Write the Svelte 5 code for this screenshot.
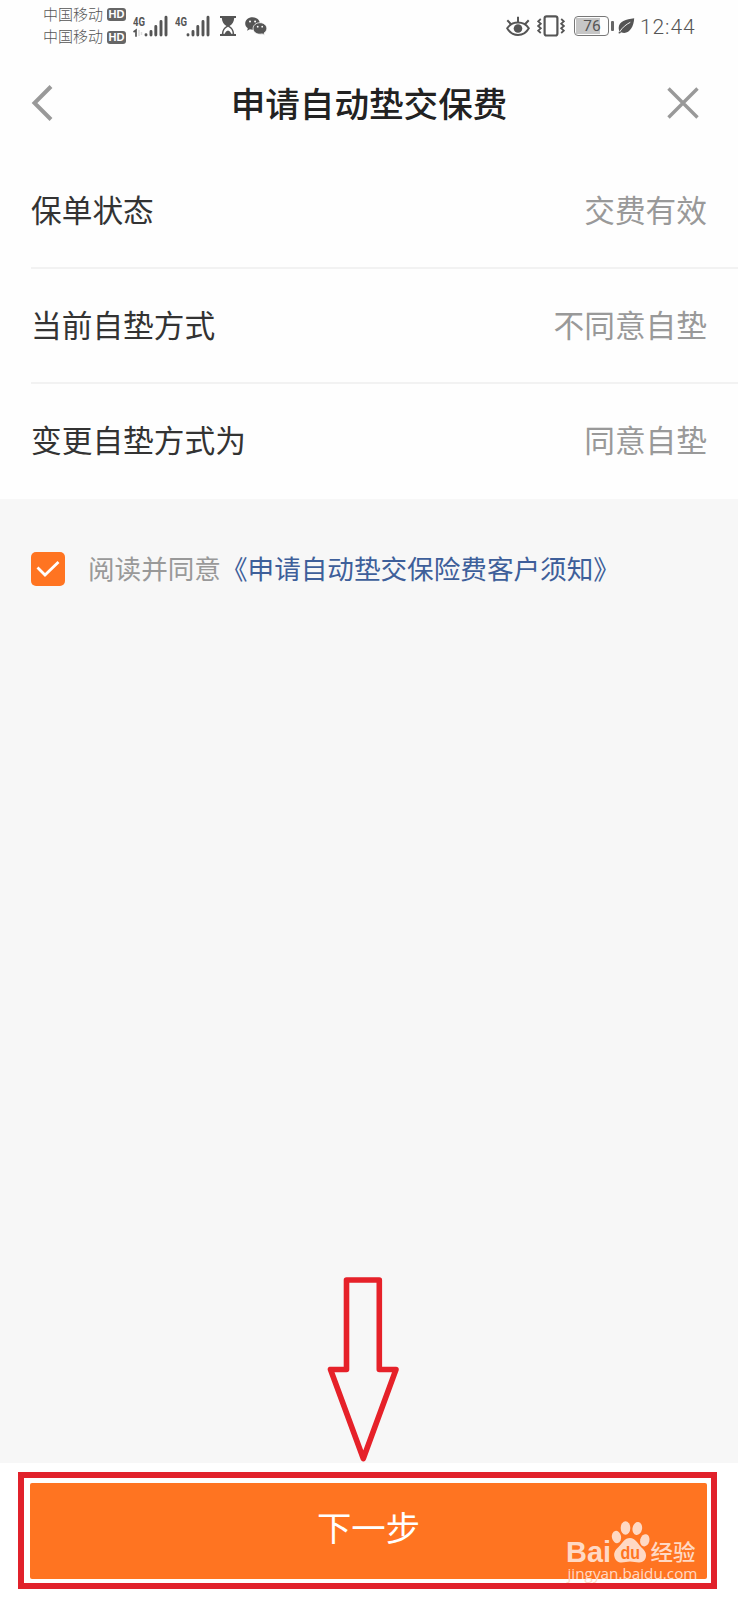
<script>
  const carriers = ["中国移动", "中国移动"];

  const rows = [
    { label: "保单状态", value: "交费有效" },
    { label: "当前自垫方式", value: "不同意自垫" },
    { label: "变更自垫方式为", value: "同意自垫" },
  ];

  let agreed = $state(true);
</script>

<div class="screen">
  <div class="status">
    <div class="carriers">
      {#each carriers as name}
        <div class="carrier"><span>{name}</span><b class="hd">HD</b></div>
      {/each}
    </div>

    <svg class="signal" width="36" height="24" viewBox="0 0 36 24">
      <text x="0" y="11.5" class="net" textLength="12" lengthAdjust="spacingAndGlyphs">4G</text>
      <path d="M0.5 18 L3 16.2 V22.8" fill="none" stroke="#555" stroke-width="1.7" />
      <path d="M6 16 V22 M8.5 18 V21" stroke="#ddd" stroke-width="1.5" />
      <path d="M13 20.8V21M18 17.5V21M22.8 12.5V21M28 7.5V21M33 3.3V21" class="bars" />
    </svg>
    <svg class="signal second" width="36" height="24" viewBox="0 0 36 24">
      <text x="0" y="11.5" class="net" textLength="12" lengthAdjust="spacingAndGlyphs">4G</text>
      <path d="M13 20.8V21M18 17.5V21M22.8 12.5V21M28 7.5V21M33 3.3V21" class="bars" />
    </svg>

    <svg class="hourglass" width="16" height="20" viewBox="0 0 16 20">
      <path d="M0 0H16V2H14.2C14 6 12 8.4 9.5 10C12 11.6 14 14 14.2 18H16V20H0V18H1.8C2 14 4 11.6 6.5 10C4 8.4 2 6 1.8 2H0Z" fill="#555" />
      <path d="M8 10.8C5 12.2 3.5 14.5 3.3 17.8H4.8C5.5 15.5 6.5 14.8 8 14.4C9.5 14.8 10.5 15.5 11.2 17.8H12.7C12.5 14.5 11 12.2 8 10.8Z" fill="#fff" />
    </svg>

    <svg class="wechat" width="22" height="19" viewBox="0 0 22 19">
      <path d="M7.5 0.3C3.4 0.3 0.2 3 0.2 6.5C0.2 8.5 1.2 10.2 2.8 11.3L2.1 13.7L4.9 12.3C5.8 12.6 6.6 12.7 7.5 12.7C11.7 12.7 14.9 10 14.9 6.5S11.7 0.3 7.5 0.3Z" fill="#555" />
      <path d="M15 5.7C11.1 5.7 8.1 8.2 8.1 11.5S11.1 17.2 15 17.2C15.8 17.2 16.5 17.1 17.2 16.9L19.6 18.3L19 16.1C20.8 15 21.8 13.4 21.8 11.5C21.8 8.2 18.8 5.7 15 5.7Z" fill="#555" stroke="#fff" stroke-width="0.8" />
      <circle cx="5" cy="4.6" r="1" fill="#fff" />
      <circle cx="10.1" cy="4.6" r="1" fill="#fff" />
      <circle cx="12.7" cy="9.7" r="0.9" fill="#fff" />
      <circle cx="17.2" cy="9.7" r="0.9" fill="#fff" />
    </svg>

    <div class="gap"></div>

    <svg class="eye" width="24" height="21" viewBox="0 0 24 21" fill="none" stroke="#555" stroke-width="2">
      <path d="M1.2 12.3C6.2 4.7 17.8 4.7 22.8 12.3C17.8 21.3 6.2 21.3 1.2 12.3Z" />
      <path d="M12 6V0.8M5 8.2L1.3 4.2M19 8.2L22.7 4.2" />
      <circle cx="12" cy="12.5" r="4.3" fill="#555" stroke="none" />
    </svg>

    <svg class="vibrate" width="28" height="22" viewBox="0 0 28 22" fill="none" stroke="#555">
      <rect x="7.6" y="1.3" width="12.8" height="19.2" rx="2" stroke-width="2.2" />
      <path d="M3.8 4L1.2 6.3L3.8 8.7L1.2 11L3.8 13.3L1.2 15.7L3.8 18M24.2 4L26.8 6.3L24.2 8.7L26.8 11L24.2 13.3L26.8 15.7L24.2 18" stroke-width="1.8" />
    </svg>

    <div class="battery"><span>76</span></div>
    <i class="cap"></i>

    <svg class="leaf" width="17" height="17" viewBox="0 0 17 17">
      <path d="M16.2 0.3C8 1.2 0.5 3.5 0.7 10.2C0.7 11 0.9 11.8 1.2 12.5L0.5 15.2L2 15.5L3 14.2C10.5 17.2 15.7 9.8 16.2 0.3Z" fill="#555" />
      <path d="M1.5 14C4.5 9.3 8 6.5 12.3 4.3" fill="none" stroke="#fff" stroke-width="0.9" />
    </svg>
    <span class="clock">12:44</span>
  </div>

  <header>
    <button class="nav" aria-label="返回">
      <svg width="22" height="38" viewBox="0 0 22 38" fill="none" stroke="#999" stroke-width="4">
        <path d="M20 2.5L3.5 19L20 35.5" />
      </svg>
    </button>
    <h1>申请自动垫交保费</h1>
    <button class="nav" aria-label="关闭">
      <svg width="32" height="32" viewBox="0 0 32 32" fill="none" stroke="#999" stroke-width="3.4">
        <path d="M1.5 1.5L30.5 30.5M30.5 1.5L1.5 30.5" />
      </svg>
    </button>
  </header>

  <section class="rows">
    {#each rows as row}
      <div class="row">
        <span>{row.label}</span>
        <span class="value">{row.value}</span>
      </div>
    {/each}
  </section>

  <main>
    <div class="agreement">
      <button class="check" class:on={agreed} role="checkbox" aria-checked={agreed} aria-label="阅读并同意" onclick={() => (agreed = !agreed)}>
        {#if agreed}
          <svg width="24" height="18" viewBox="0 0 24 18" fill="none" stroke="#fff" stroke-width="2.8">
            <path d="M1.5 7.5L9 15L22.5 2" />
          </svg>
        {/if}
      </button>
      <span>阅读并同意</span><span class="link">《申请自动垫交保险费客户须知》</span>
    </div>
  </main>

  <footer>
    <button class="next">下一步</button>
  </footer>

  <!-- guide marks over the page -->
  <div class="frame"></div>
  <svg class="arrow" width="76" height="188" viewBox="0 0 76 188" fill="none" stroke="#e62129" stroke-width="5.6" stroke-linejoin="round">
    <path d="M21.5 5H54.3V94.5H71L38.3 183.5L5.5 94.5H21.5Z" />
  </svg>

  <svg class="watermark" width="140" height="64" viewBox="0 0 140 64" fill="#ffd9c4">
    <text x="0" y="41.5" class="brand" textLength="45" lengthAdjust="spacingAndGlyphs">Bai</text>
    <ellipse cx="50.5" cy="17" rx="4.6" ry="6.2" transform="rotate(-12 50.5 17)" />
    <ellipse cx="59.5" cy="8" rx="4.8" ry="6.7" />
    <ellipse cx="71.3" cy="8.5" rx="4.8" ry="6.5" transform="rotate(10 71.3 8.5)" />
    <ellipse cx="78.8" cy="20.3" rx="4.6" ry="6.2" transform="rotate(14 78.8 20.3)" />
    <path d="M64 18C58.5 18 56.5 23 52.5 27C48 31 47.8 34 48.5 37C49.3 40.5 52 42.5 55.5 42.5C59 42.5 61 41.5 64 41.5S70 42.5 73 42.5C77.5 42.5 80 39.5 80 35.5C80 31.5 77.5 29.5 75 27C71.5 23.5 69.5 18 64 18Z" />
    <text x="54.5" y="38.5" class="du" textLength="19.5" lengthAdjust="spacingAndGlyphs">du</text>
    <text x="84.5" y="39.5" class="cn" textLength="45" lengthAdjust="spacingAndGlyphs">经验</text>
    <text x="1.5" y="58.5" class="site" textLength="130" lengthAdjust="spacingAndGlyphs">jingyan.baidu.com</text>
  </svg>
</div>

<style>
  :global(body) { margin: 0; background: #fff; }
  .screen {
    position: relative;
    display: flex;
    flex-direction: column;
    width: 738px;
    height: 1600px;
    overflow: hidden;
    background: #fefefe;
    color: #333;
    font-family: "Noto Sans CJK SC", sans-serif;
  }
  button { border: none; padding: 0; background: none; font: inherit; cursor: pointer; }
  svg { display: block; flex-shrink: 0; }

  .status {
    display: flex;
    align-items: center;
    height: 52px;
    box-sizing: border-box;
    padding: 0 43px 0 43px;
    color: #555;
  }
  .carriers { width: 90px; }
  .carrier { display: flex; align-items: center; gap: 4px; height: 22.5px; font-size: 15px; font-weight: 300; line-height: 20px; }
  .carrier span { padding-bottom: 2px; }
  .hd {
    width: 19px;
    height: 13px;
    border-radius: 3px;
    background: #666;
    color: #fff;
    font: bold 11px/13px "Liberation Sans", sans-serif;
    text-align: center;
  }
  .net { font: bold 13px Roboto, sans-serif; fill: #555; }
  .bars { stroke: #555; stroke-width: 2.9; stroke-linecap: round; }
  .second { margin-left: 6px; }
  .hourglass { margin-left: 9px; }
  .wechat { margin-left: 9px; }
  .gap { flex: 1; }
  .vibrate { margin-left: 7px; margin-right: 9px; }
  .battery {
    width: 35px;
    height: 20px;
    box-sizing: border-box;
    padding: 1px;
    border: 1.5px solid #777;
    border-radius: 4px;
    font: 15.5px/16px Roboto, sans-serif;
    text-align: center;
  }
  .battery span { display: block; width: 24px; height: 16px; padding-left: 4px; background: linear-gradient(90deg, #c6c6c6 24px, transparent 24px); }
  .cap { width: 3px; height: 10px; margin-left: 2px; border-radius: 1px; background: #666; }
  .leaf { margin: 0 5px 0 4px; }
  .clock { width: 55px; padding-top: 2px; font: 300 21px/24px Roboto, sans-serif; letter-spacing: 0.9px; white-space: nowrap; }

  header {
    display: flex;
    align-items: center;
    justify-content: space-between;
    height: 102px;
    box-sizing: border-box;
    padding: 0 39px 0 31px;
  }
  .nav { width: 32px; display: flex; }
  h1 { margin: 0 0 3px 8px; color: #222; font-size: 34.6px; font-weight: 500; line-height: 50px; }

  .rows { padding-left: 31px; }
  .row {
    display: flex;
    justify-content: space-between;
    align-items: center;
    height: 115px;
    box-sizing: border-box;
    padding: 0 31px 5px 0;
    border-bottom: 2px solid #f2f2f2;
    font-size: 30.7px;
  }
  .row:last-child { border-bottom-color: transparent; }
  .value { color: #999; }

  main { flex: 1; background: #f7f7f7; }
  .agreement { display: flex; align-items: center; padding: 51px 0 0 31px; color: #999; font-size: 26.6px; line-height: 36px; white-space: nowrap; }
  .agreement span { padding-bottom: 2px; }
  .check {
    display: flex;
    align-items: center;
    justify-content: center;
    width: 34px;
    height: 34px;
    margin-right: 23px;
    border-radius: 5px;
    background: #ddd;
  }
  .check.on { background: #ff7421; }
  .link { color: #3e5f9a; }

  footer { height: 137px; box-sizing: border-box; padding: 20px 31px 0 30px; background: #fff; }
  .next { width: 100%; height: 96px; padding-bottom: 10px; border-radius: 2px; background: #ff7421; color: #fff; font-size: 34.4px; }

  .frame { position: absolute; left: 18px; top: 1472px; width: 699px; height: 117px; box-sizing: border-box; border: 6px solid #e1212b; }
  .arrow { position: absolute; left: 325px; top: 1275px; }
  .watermark { position: absolute; left: 566px; top: 1520px; }
  .brand { font: bold 30px "Liberation Sans", sans-serif; }
  .du { font: bold 19px "Liberation Sans", sans-serif; fill: #ff7421; }
  .cn { font: 500 22px "Noto Sans CJK SC", sans-serif; }
  .site { font: 15px "Open Sans", sans-serif; }
</style>
